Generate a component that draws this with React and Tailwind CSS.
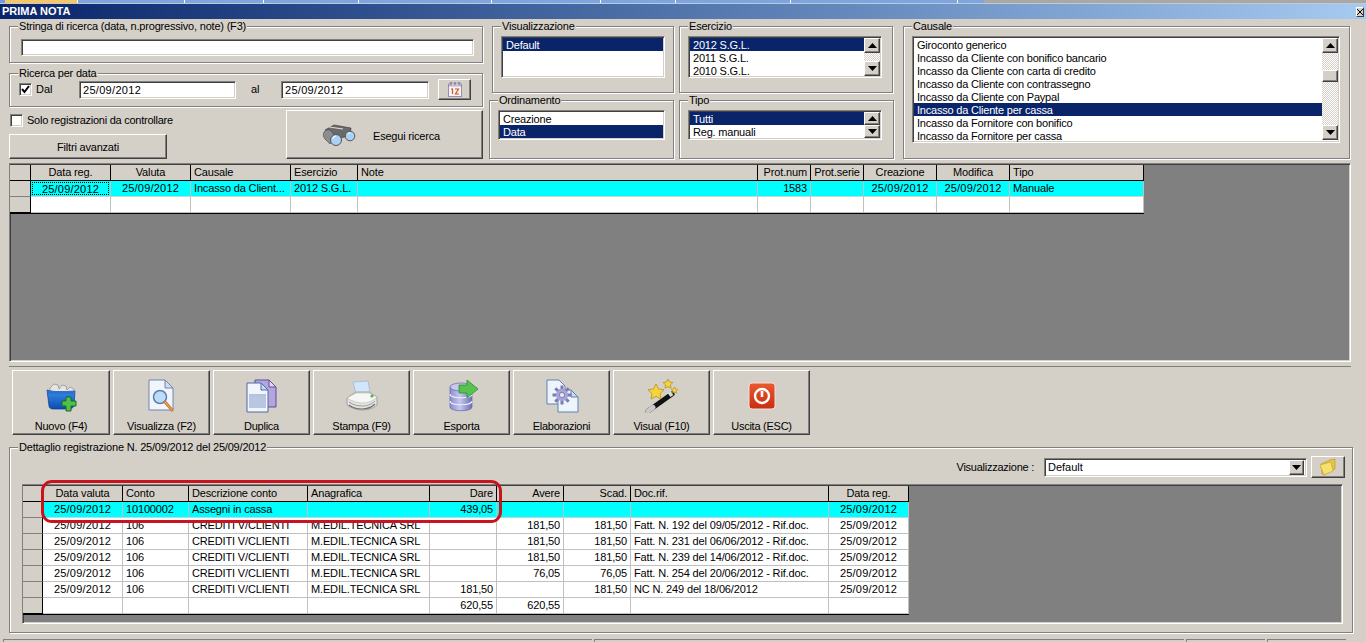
import React from "react";

const raised = "border border-t-white border-l-white border-r-[#404040] border-b-[#404040] shadow-[inset_-1px_-1px_0_#808080]";
const sunken = "border border-t-[#808080] border-l-[#808080] border-r-white border-b-white shadow-[inset_1px_1px_0_#404040,inset_-1px_-1px_0_#d4d0c8]";
const check = "bg-[repeating-conic-gradient(#d4d0c8_0_25%,#ffffff_0_50%)] bg-[length:2px_2px]";

function Group({ title, className, children }) {
  return (
    <fieldset className={"border border-[#808080] shadow-[1px_1px_0_#fff,inset_1px_1px_0_#fff] shrink-0 " + className}>
      <legend className="ml-[8px] px-px leading-[13px] text-[11px] bg-[#d4d0c8] tracking-[-0.2px]">{title}</legend>
      {children}
    </fieldset>
  );
}

function Arrow({ up }) {
  return (
    <svg width="9" height="5" viewBox="0 0 9 5">
      <path d={up ? "M4.5 0 9 5H0z" : "M0 0h9L4.5 5z"} fill="#000" />
    </svg>
  );
}
function SBtn({ up, cls }) {
  return <div className={"w-full flex items-center justify-center bg-[#d4d0c8] " + raised + " " + cls}><Arrow up={up} /></div>;
}

function ListBox({ items, selected, className, bar }) {
  return (
    <div className={"bg-white px-px pt-px flex tracking-[-0.2px] " + sunken + " " + className}>
      <div className="flex-1 min-w-0">
        {items.map((t, i) => (
          <div key={t} className={"h-[13px] leading-[15px] pl-[3px] whitespace-nowrap overflow-hidden " + (i === selected ? "bg-[#0a246a] text-white" : "")}>{t}</div>
        ))}
      </div>
      {bar}
    </div>
  );
}

const G1 = "grid grid-cols-[21px_80px_80px_100px_67px_400px_53px_53px_73px_73px_134px]";
const G2 = "grid grid-cols-[20px_80px_66px_119px_122px_67px_67px_67px_198px_80px]";
const L = "text-left pl-[3px]";
const C = "text-center";
const R = "text-right pr-[3px]";

function HeadCell({ children, a }) {
  return <div className={"h-[16px] leading-[15px] border-r border-b border-black bg-[#d4d0c8] whitespace-nowrap overflow-hidden tracking-[-0.15px] " + a}>{children}</div>;
}
function Cell({ children, a, cyan, focus }) {
  const isDate = typeof children === "string" && /^\d\d\/\d\d\/\d{4}$/.test(children);
  return (
    <div className={"h-[16px] leading-[15px] border-r border-r-[#c0c0c0] whitespace-nowrap overflow-hidden " + (isDate ? "tracking-[0.2px] " : "tracking-[-0.15px] ") + (cyan ? "bg-[#00ffff] border-b border-b-[#c0d8d8] " : "bg-white border-b border-b-[#c0c0c0] ") + a}>
      {focus ? <div className="h-[13px] m-px leading-[12px] border border-dotted border-black">{children}</div> : children}
    </div>
  );
}
function Ind({ end }) {
  return <div className={"h-[16px] bg-[#d4d0c8] border-r border-black " + (end ? "border-b border-b-black" : "border-b border-b-[#808080]")} />;
}

function Table({ grid, width, aligns, head, rows }) {
  return (
    <div className={"bg-white border-r border-b border-black " + width}>
      <div className={grid}>
        <HeadCell a="" />
        {head.map((h, i) => <HeadCell key={i} a={aligns[i]}>{h}</HeadCell>)}
      </div>
      {rows.map((r, ri) => (
        <div key={ri} className={grid}>
          <Ind end={ri === rows.length - 1} />
          {r.cells.map((c, i) => (
            <Cell key={i} a={aligns[i]} cyan={r.cyan} focus={r.focus && i === 0}>{c}</Cell>
          ))}
        </div>
      ))}
    </div>
  );
}

const I = {
  Nuovo: () => (
    <svg width="34" height="34" viewBox="0 0 34 34">
      <defs><linearGradient id="nb" x1="0" y1="0" x2="0" y2="1"><stop offset="0" stopColor="#3b8ee8" /><stop offset="1" stopColor="#0b4cb0" /></linearGradient></defs>
      <path d="M6 9l4-4 4 1 1 4 3-4 4 1 1 4 3-3 4 2v6H6z" fill="#e8e4e0" stroke="#8d8a86" strokeWidth=".7" />
      <path d="M3 11c6 2 14 2 28 1l-1 15c-1 2-3 3-5 3H9c-2 0-4-1-4-3z" fill="url(#nb)" stroke="#0a3f8f" strokeWidth=".7" />
      <path d="M3 12h28v3H4z" fill="#2a72d4" />
      <path d="M22 18h5v4h5v5h-5v5h-5v-5h-4v-5h4z" fill="#4fc04a" stroke="#1d6b26" strokeWidth="1" />
    </svg>
  ),
  View: () => (
    <svg width="34" height="34" viewBox="0 0 34 34">
      <path d="M4 1h16l8 8v22H4z" fill="#f2f6fc" stroke="#6d86b4" />
      <path d="M20 1v8h8z" fill="#cfdff2" stroke="#6d86b4" />
      <circle cx="15" cy="18" r="6.5" fill="#bfdcf6" stroke="#5a7fb4" strokeWidth="1.5" />
      <path d="M20 23l7 8" stroke="#c77a2a" strokeWidth="3" strokeLinecap="round" />
      <path d="M20 23l7 8" stroke="#f3bb78" strokeWidth="1" strokeLinecap="round" />
    </svg>
  ),
  Dup: () => (
    <svg width="34" height="34" viewBox="0 0 34 34">
      <path d="M10 1h14l7 7v20H10z" fill="#b4a6dc" stroke="#5f4c9c" />
      <path d="M24 1v7h7z" fill="#e0d8f4" stroke="#5f4c9c" />
      <path d="M2 4h14l7 7v22H2z" fill="#f2f6fc" stroke="#4a6aa4" />
      <path d="M16 4v7h7z" fill="#c9dbf2" stroke="#4a6aa4" />
      <path d="M4 17h17v12H4z" fill="#b9c6e2" />
      <path d="M4 16h17" stroke="#7b8fb8" />
    </svg>
  ),
  Print: () => (
    <svg width="34" height="34" viewBox="0 0 34 34">
      <path d="M8 3l15-1 2 11-14 2z" fill="#cfe6fb" stroke="#9ab4cc" strokeWidth=".7" />
      <path d="M2 19l9-6h13l8 5v8c-4 4-10 5-15 5-6 0-11-2-15-5z" fill="#e4e4e2" stroke="#8a8a88" strokeWidth=".7" />
      <path d="M2 19c5 3 10 5 15 5 6 0 11-2 15-6-4-2-7-4-9-4H11z" fill="#f6f6f4" stroke="#a8a8a6" strokeWidth=".5" />
      <path d="M4 26c4 3 9 4 13 4s9-1 13-5" fill="none" stroke="#6d6d6b" strokeWidth="1.2" />
      <path d="M4 23c4 3 9 4 13 4s9-1 13-5" fill="none" stroke="#9a9a98" />
      <circle cx="27" cy="17" r="1.6" fill="#56b04a" />
    </svg>
  ),
  Export: () => (
    <svg width="34" height="34" viewBox="0 0 34 34">
      <defs><linearGradient id="db" x1="0" y1="0" x2="1" y2="0"><stop offset="0" stopColor="#8c8ed0" /><stop offset=".45" stopColor="#c6c8ee" /><stop offset="1" stopColor="#6d6fb6" /></linearGradient></defs>
      <path d="M5 8v20c0 5 22 5 22 0V8z" fill="url(#db)" stroke="#6366a8" strokeWidth=".7" />
      <ellipse cx="16" cy="8" rx="11" ry="4" fill="#c6c8ee" stroke="#6366a8" strokeWidth=".7" />
      <path d="M5 15c0 5 22 5 22 0M5 22c0 5 22 5 22 0" fill="none" stroke="#eceefa" strokeWidth="1.2" />
      <path d="M14 6h8V1l11 9-11 9v-5h-8z" fill="#58c24e" stroke="#2c8a38" strokeWidth=".8" />
    </svg>
  ),
  Elab: () => (
    <svg width="34" height="34" viewBox="0 0 34 34">
      <path d="M2 1h12l6 6v18H2z" fill="#eef4fb" stroke="#5f82b2" />
      <path d="M13 11h13l7 7v15H13z" fill="#eef4fb" stroke="#5f82b2" />
      <path d="M26 11v7h7z" fill="#c9dbf2" stroke="#5f82b2" />
      <g transform="translate(17 16)">
        <g stroke="#7e7ab4" strokeWidth="3">
          <path d="M0-9.5V9.5M-9.5 0H9.5M-6.7-6.7 6.7 6.7M-6.7 6.7 6.7-6.7" />
        </g>
        <circle r="6" fill="#a9a4d6" />
        <circle r="2.6" fill="#e6e6f4" stroke="#66629c" strokeWidth=".7" />
      </g>
    </svg>
  ),
  Wand: () => (
    <svg width="34" height="34" viewBox="0 0 34 34">
      <path d="M3 32l24-17" stroke="#111" strokeWidth="5" strokeLinecap="round" />
      <path d="M3 32l5-3.6" stroke="#c8c8c8" strokeWidth="5" strokeLinecap="round" />
      <path d="M24 16l3-2" stroke="#d8d8d8" strokeWidth="5" />
      <path d="M11 5l2.5 5 5.5.8-4 3.8 1 5.4-5-2.6-5 2.6 1-5.4-4-3.8 5.5-.8z" fill="#f6d53a" stroke="#b08a16" strokeWidth=".7" />
      <path d="M23 0l1.5 3 3.4.5-2.5 2.4.6 3.3-3-1.6-3 1.6.6-3.3-2.5-2.4 3.4-.5z" fill="#f6d53a" stroke="#b08a16" strokeWidth=".7" />
      <path d="M29.5 8l1 2 2.2.3-1.6 1.6.4 2.2-2-1-2 1 .4-2.2-1.6-1.6 2.2-.3z" fill="#f6d53a" stroke="#b08a16" strokeWidth=".6" />
    </svg>
  ),
  Exit: () => (
    <svg width="34" height="34" viewBox="0 0 34 34">
      <defs><linearGradient id="ex" x1="0" y1="0" x2="0" y2="1"><stop offset="0" stopColor="#ea5a30" /><stop offset="1" stopColor="#c62e10" /></linearGradient></defs>
      <rect x="4" y="4" width="26" height="26" rx="3" fill="url(#ex)" stroke="#f6e0d8" />
      <circle cx="17" cy="17" r="7" fill="none" stroke="#fff" strokeWidth="2.4" />
      <path d="M17 12v6" stroke="#fff" strokeWidth="2.6" />
    </svg>
  ),
};

const tools = [
  ["Nuovo (F4)", I.Nuovo], ["Visualizza (F2)", I.View], ["Duplica", I.Dup], ["Stampa (F9)", I.Print],
  ["Esporta", I.Export], ["Elaborazioni", I.Elab], ["Visual (F10)", I.Wand], ["Uscita (ESC)", I.Exit],
];

const g1Rows = [
  { cyan: true, focus: true, cells: ["25/09/2012", "25/09/2012", "Incasso da Client...", "2012 S.G.L.", "", "1583", "", "25/09/2012", "25/09/2012", "Manuale"] },
  { cells: ["", "", "", "", "", "", "", "", "", ""] },
];
const d = "25/09/2012", cv = "CREDITI V/CLIENTI", ed = "M.EDIL.TECNICA SRL";
const g2Rows = [
  { cyan: true, cells: [d, "10100002", "Assegni in cassa", "", "439,05", "", "", "", d] },
  { cells: [d, "106", cv, ed, "", "181,50", "181,50", "Fatt. N. 192 del 09/05/2012 - Rif.doc.", d] },
  { cells: [d, "106", cv, ed, "", "181,50", "181,50", "Fatt. N. 231 del 06/06/2012 - Rif.doc.", d] },
  { cells: [d, "106", cv, ed, "", "181,50", "181,50", "Fatt. N. 239 del 14/06/2012 - Rif.doc.", d] },
  { cells: [d, "106", cv, ed, "", "76,05", "76,05", "Fatt. N. 254 del 20/06/2012 - Rif.doc.", d] },
  { cells: [d, "106", cv, ed, "181,50", "", "181,50", "NC N. 249 del 18/06/2012", d] },
  { cells: ["", "", "", "", "620,55", "620,55", "", "", ""] },
];

export default function App() {
  return (
    <div className="w-[1366px] h-[642px] overflow-hidden bg-[#d4d0c8] text-black text-[11px] font-['Liberation_Sans',sans-serif] flex flex-col">
      {/* window tabs strip */}
      <div className="h-[3px] flex bg-[#a8a8a8] shrink-0">
        <div className="w-[5px] bg-[#6f9ce0]" />
        <div className="w-[73px] bg-[#f6c766] border-r border-white" />
        <div className="w-[107px] bg-[#7aa6e6] border-r border-white" />
        <div className="w-[79px] bg-[#7aa6e6] border-r border-white" />
        <div className="w-[95px] bg-[#7aa6e6] border-r border-white" />
        <div className="w-[133px] bg-[#7aa6e6] border-r border-white" />
        <div className="w-[109px] bg-[#7aa6e6] border-r border-white" />
        <div className="w-[75px] bg-[#7aa6e6] border-r border-white" />
        <div className="w-[115px] bg-[#7aa6e6] border-r border-white" />
        <div className="w-[167px] bg-[#7aa6e6] border-r border-white" />
        <div className="w-[26px] bg-[#7aa6e6]" />
      </div>
      <div className="h-px bg-[#c8c8c8] shrink-0" />
      {/* title bar */}
      <div className="h-[15px] shrink-0 bg-linear-to-r from-[#0a246a] to-[#a6caf0] flex items-center justify-between pl-[2px] pr-[2px]">
        <span className="font-bold text-white leading-[15px]">PRIMA NOTA</span>
        <div className={"w-[8px] h-[10px] bg-[#d4d0c8] flex items-center justify-center border border-t-white border-l-white border-r-[#404040] border-b-[#404040]"}>
          <svg width="6" height="6" viewBox="0 0 6 6"><path d="M0 0l6 6M6 0L0 6" stroke="#000" strokeWidth="1" /></svg>
        </div>
      </div>

      {/* top filters */}
      <div className="flex pt-px pl-[9px] h-[141px] shrink-0">
        <div className="w-[474px] shrink-0 flex flex-col">
          <Group title="Stringa di ricerca (data, n.progressivo, note) (F3)" className="h-[43px]">
            <div className={"mt-[6px] ml-[11px] w-[453px] h-[17px] bg-white " + sunken} />
          </Group>
          <Group title="Ricerca per data" className="h-[40px] mt-[4px]">
            <div className="flex items-center h-[21px] -mt-px">
              <div className={"ml-[9px] w-[13px] h-[13px] bg-white flex items-center justify-center " + sunken}>
                <svg width="9" height="9" viewBox="0 0 9 9"><path d="M1 4l2.5 3L8 1" fill="none" stroke="#000" strokeWidth="2" /></svg>
              </div>
              <span className="w-[47px] pl-[4px]">Dal</span>
              <div className={"w-[157px] h-[18px] bg-white pl-[3px] leading-[17px] tracking-[0.3px] " + sunken}>25/09/2012</div>
              <span className="w-[45px] pl-[15px]">al</span>
              <div className={"w-[148px] h-[18px] bg-white pl-[3px] leading-[17px] tracking-[0.3px] " + sunken}>25/09/2012</div>
              <button className={"ml-[9px] w-[33px] h-[21px] flex items-center justify-center " + raised}>
                <svg width="16" height="16" viewBox="0 0 16 16">
                  <rect x="1.5" y="2.5" width="13" height="12" fill="#f6f2f6" stroke="#9a8cb0" />
                  <rect x="2" y="1" width="12" height="3" fill="#d8cce4" stroke="#8a7ca0" strokeWidth=".5" />
                  <path d="M4 0v3M8 0v3M12 0v3" stroke="#666" />
                  <path d="M4 7h1.5v5M8 7h3.5l-3 5h3.5" fill="none" stroke="#d8541e" strokeWidth="1.2" />
                </svg>
              </button>
            </div>
          </Group>
          <div className="flex justify-between mt-[3px]">
            <div className="w-[158px] flex flex-col">
              <div className="flex items-center mt-[4px] h-[13px]">
                <div className={"ml-px w-[13px] h-[13px] bg-white shrink-0 " + sunken} />
                <span className="ml-[4px] whitespace-nowrap tracking-[-0.25px]">Solo registrazioni da controllare</span>
              </div>
              <button className={"mt-[7px] w-[158px] h-[25px] pt-px tracking-[-0.2px] " + raised}>Filtri avanzati</button>
            </div>
            <button className={"w-[197px] h-[49px] flex items-center pl-[35px] " + raised}>
              <svg width="34" height="24" viewBox="0 0 34 24">
                <path d="M3 7l9-5 17 3-1 8-16 3z" fill="#6a6a6a" stroke="#333" strokeWidth=".6" />
                <path d="M2 9c2-3 6-3 8 0l4 6-6 6-5-5c-2-2-2-5-1-7z" fill="#8c8c8c" stroke="#444" strokeWidth=".6" />
                <path d="M7 4l14 2" stroke="#ddd" strokeWidth="1.2" />
                <circle cx="14" cy="17" r="5.5" fill="#a9d2f4" stroke="#555" />
                <circle cx="28" cy="13" r="4.8" fill="#a9d2f4" stroke="#555" />
                <path d="M11 16a3 3 0 0 1 3-3M26 11a2.5 2.5 0 0 1 2-1" stroke="#fff" fill="none" />
              </svg>
              <span className="ml-[17px] mt-[3px] whitespace-nowrap tracking-[-0.2px]">Esegui ricerca</span>
            </button>
          </div>
        </div>

        <div className="ml-[6px] w-[405px] shrink-0 flex flex-col">
          <div className="flex pl-[3px] gap-[5px]">
            <Group title="Visualizzazione" className="w-[182px] h-[73px]">
              <div className="pt-[3px] pl-[8px]">
                <ListBox items={["Default"]} selected={0} className="w-[164px] h-[42px]" />
              </div>
            </Group>
            <Group title="Esercizio" className="w-[214px] h-[73px]">
              <div className="pt-[3px] pl-[8px]">
                <ListBox
                  items={["2012 S.G.L.", "2011 S.G.L.", "2010 S.G.L."]}
                  selected={0}
                  className="w-[194px] h-[42px]"
                  bar={
                    <div className={"w-[16px] shrink-0 flex flex-col mb-px " + check}>
                      <SBtn up cls="h-[15px]" />
                      <div className="flex-1" />
                      <SBtn cls="h-[15px]" />
                    </div>
                  }
                />
              </div>
            </Group>
          </div>
          <div className="flex gap-[5px] mt-px">
            <Group title="Ordinamento" className="w-[185px] h-[65px]">
              <div className="pt-[3px] pl-[8px]">
                <ListBox items={["Creazione", "Data"]} selected={1} className="w-[167px] h-[30px]" />
              </div>
            </Group>
            <Group title="Tipo" className="w-[215px] h-[65px]">
              <div className="pt-[3px] pl-[8px]">
                <ListBox
                  items={["Tutti", "Reg. manuali"]}
                  selected={0}
                  className="w-[194px] h-[30px]"
                  bar={
                    <div className="w-[16px] shrink-0 flex flex-col">
                      <SBtn up cls="h-[13px]" />
                      <SBtn cls="h-[13px]" />
                    </div>
                  }
                />
              </div>
            </Group>
          </div>
        </div>

        <Group title="Causale" className="ml-[9px] w-[447px] h-[139px]">
          <div className="pt-[3px] pl-[8px]">
            <ListBox
              items={["Giroconto generico", "Incasso da Cliente con bonifico bancario", "Incasso da Cliente con carta di credito", "Incasso da Cliente con contrassegno", "Incasso da Cliente con Paypal", "Incasso da Cliente per cassa", "Incasso da Fornitore con bonifico", "Incasso da Fornitore per cassa"]}
              selected={5}
              className="w-[428px] h-[107px]"
              bar={
                <div className={"w-[16px] shrink-0 flex flex-col mb-[2px] " + check}>
                  <SBtn up cls="h-[15px]" />
                  <div className="h-[17px]" />
                  <div className={"h-[12px] bg-[#d4d0c8] " + raised} />
                  <div className="flex-1" />
                  <SBtn cls="h-[15px]" />
                </div>
              }
            />
          </div>
        </Group>
      </div>

      {/* first grid */}
      <div className={"ml-[9px] mt-[3px] w-[1342px] h-[199px] shrink-0 bg-[#808080] pt-px " + sunken}>
        <Table
          grid={G1}
          width="w-[1134px]"
          aligns={[C, C, L, L, L, R, C, C, C, L]}
          head={["Data reg.", "Valuta", "Causale", "Esercizio", "Note", "Prot.num", "Prot.serie", "Creazione", "Modifica", "Tipo"]}
          rows={g1Rows}
        />
      </div>

      {/* toolbar */}
      <div className="ml-[9px] mt-[4px] w-[1342px] h-[75px] shrink-0 border-t border-[#808080] pt-[3px] pl-[3px] flex gap-[3px]">
        {tools.map(([label, Icon], i) => (
          <button key={label} className={(i === 0 ? "w-[98px]" : "w-[97px]") + " h-[65px] flex flex-col items-center pt-[8px] " + raised}>
            <Icon />
            <span className="mt-[7px] leading-[13px] whitespace-nowrap tracking-[-0.25px]">{label}</span>
          </button>
        ))}
      </div>

      {/* detail */}
      <Group title="Dettaglio registrazione N. 25/09/2012 del 25/09/2012" className="ml-[9px] w-[1344px] h-[192px]">
        <div className="pl-[12px] pt-[2px]">
          <div className="w-[1323px] h-[22px] flex items-center justify-end">
            <span className="whitespace-nowrap tracking-[-0.25px]">Visualizzazione :</span>
            <div className={"ml-[10px] w-[263px] h-[19px] bg-white flex items-center justify-between pl-[3px] pr-[2px] " + sunken}>
              <span>Default</span>
              <div className={"w-[15px] h-[15px] flex items-center justify-center bg-[#d4d0c8] " + raised}><Arrow /></div>
            </div>
            <button className={"ml-[4px] w-[34px] h-[22px] flex items-center justify-center " + raised}>
              <svg width="18" height="18" viewBox="0 0 18 18">
                <path d="M2 6l9-4 5-1v10l-11 6-2-1z" fill="#e8c440" stroke="#b89a30" strokeWidth=".7" />
                <path d="M1 7l11-3 2 9-9 4z" fill="#f8e070" stroke="#c4a83a" strokeWidth=".7" />
              </svg>
            </button>
          </div>
          <div className={"relative mt-[6px] w-[1321px] h-[140px] bg-[#808080] pt-px " + sunken}>
            <Table
              grid={G2}
              width="w-[886px]"
              aligns={[C, L, L, L, R, R, R, L, C]}
              head={["Data valuta", "Conto", "Descrizione conto", "Anagrafica", "Dare", "Avere", "Scad.", "Doc.rif.", "Data reg."]}
              rows={g2Rows}
            />
            <div className="absolute left-[18px] top-[-5px] w-[461px] h-[43px] border-[3px] border-[#c8141e] rounded-[11px] overflow-hidden">
              <div className="absolute left-0 right-0 bottom-0 h-[2px] bg-white" />
            </div>
          </div>
        </div>
      </Group>

      {/* status bar */}
      <div className="mt-[6px] pl-[3px] flex gap-[2px] h-[4px] shrink-0">
        <div className="w-[589px] border-t border-l border-[#808080]" />
        <div className="w-[590px] border-t border-l border-[#808080]" />
        <div className="w-[79px] border-t border-l border-[#808080]" />
        <div className="w-[79px] border-t border-l border-[#808080]" />
      </div>
    </div>
  );
}
